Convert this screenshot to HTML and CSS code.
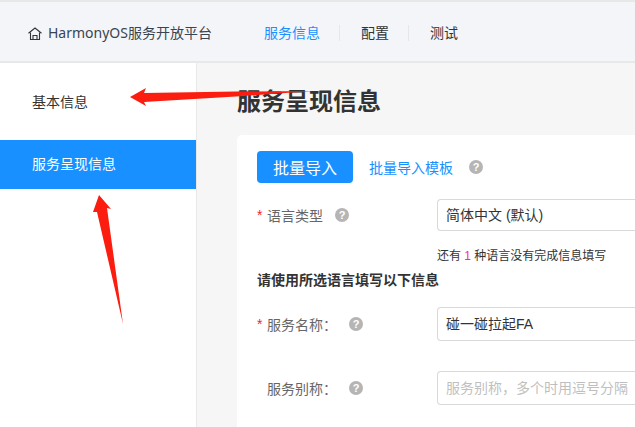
FILE: index.html
```html
<!DOCTYPE html>
<html lang="zh">
<head>
    <meta charset="UTF-8">
    <title>HarmonyOS服务开放平台</title>
    <link rel="stylesheet" href="styles.css">
</head>
<body>
    <header class="topbar">
        <div class="brand">
            <svg class="home-icon" width="14" height="13" viewBox="0 0 14 13" fill="none" stroke="#333" stroke-width="1.1">
                <path d="M0.5 6.2 L7 1 L13.5 6.2"/>
                <path d="M2.5 5.5 V12.5 H11.5 V5.5"/>
                <path d="M5 12.5 V8.5 H9 V12.5"/>
            </svg>
            <span>HarmonyOS服务开放平台</span>
        </div>
        <nav class="nav">
            <a class="nav-item active">服务信息</a>
            <a class="nav-item">配置</a>
            <a class="nav-item">测试</a>
        </nav>
    </header>
    <div class="layout">
        <aside class="sidebar">
            <div class="side-item">基本信息</div>
            <div class="side-item current">服务呈现信息</div>
        </aside>
        <main class="content">
            <h1 class="page-title">服务呈现信息</h1>
            <section class="card">
                <div class="import-row">
                    <button class="import-btn">批量导入</button>
                    <a class="import-link">批量导入模板</a>
                    <span class="help">?</span>
                </div>
                <div class="form-row lang-row">
                    <label class="form-label"><i class="req">*</i>语言类型<span class="help">?</span></label>
                    <div class="field">简体中文 (默认)</div>
                </div>
                <p class="lang-note">还有 <em>1</em> 种语言没有完成信息填写</p>
                <p class="section-hint">请使用所选语言填写以下信息</p>
                <div class="form-row name-row">
                    <label class="form-label"><i class="req">*</i>服务名称：<span class="help">?</span></label>
                    <div class="field tall">碰一碰拉起FA</div>
                </div>
                <div class="form-row alias-row">
                    <label class="form-label"><i class="req blank">*</i>服务别称：<span class="help">?</span></label>
                    <div class="field tall placeholder">服务别称，多个时用逗号分隔</div>
                </div>
            </section>
        </main>
    </div>
    <!-- red annotation arrows drawn over the screenshot -->
    <svg class="arrows" width="635" height="427" viewBox="0 0 635 427">
        <path fill="#fb1e10" d="M130 97 L146 88 L144 93 L236 91.5 L313 91 L236 96.5 L144 102 L146 106 Z"/>
        <path fill="#fb1e10" d="M99 195 L111 209 L107 208 L123 324 L97 212 L93 212 Z"/>
    </svg>
</body>
</html>
```

FILE: styles.css
```css
* {
    box-sizing: border-box;
}
html, body {
    height: 100%;
}
body {
    margin: 0;
    width: 635px;
    height: 427px;
    overflow: hidden;
    position: relative;
    font-family: "Liberation Sans", "Noto Sans CJK SC", sans-serif;
    font-size: 14px;
    color: #333;
    background-color: #f6f6f6;
}
.topbar {
    height: 63px;
    display: flex;
    align-items: center;
    background-color: #f3f5f9;
    border-top: 2px solid #e8e8e8;
    border-bottom: 2px solid #e8e8e8;
    padding-top: 3px;
    padding-left: 28px;
}
.brand {
    width: 236px;
    display: flex;
    align-items: center;
    gap: 6px;
    color: #3a4450;
    font-family: "Noto Sans", "Noto Sans CJK SC", sans-serif;
    font-size: 14px;
    line-height: 20px;
}
.nav {
    display: flex;
    align-items: center;
}
.nav-item {
    font-size: 14px;
    line-height: 16px;
    padding-right: 19px;
    margin-right: 21px;
    border-right: 1px solid #e4e7ec;
}
.nav-item:last-child {
    border-right: none;
}
.nav-item.active {
    color: #1890ff;
}
.layout {
    display: flex;
    height: 364px;
}
.sidebar {
    width: 197px;
    flex-shrink: 0;
    background-color: #fff;
    border-right: 1px solid #e8e8e8;
}
.side-item {
    height: 49px;
    padding-left: 32px;
    line-height: 49px;
    font-size: 14px;
    color: #333;
}
.side-item:first-child {
    height: 77px;
    line-height: 78px;
}
.side-item.current {
    background-color: #1890ff;
    color: #fff;
}
.content {
    flex: 1;
    min-width: 0;
    padding-left: 40px;
    overflow: hidden;
}
.page-title {
    margin: 0;
    padding-top: 23px;
    height: 72px;
    font-size: 24px;
    line-height: 32px;
    font-weight: bold;
    color: #333;
}
.card {
    width: 420px;
    height: 300px;
    background-color: #fff;
    border-radius: 5px;
    padding: 16px 20px;
}
.import-row {
    display: flex;
    align-items: center;
    height: 32px;
}
.import-btn {
    width: 96px;
    height: 32px;
    border: none;
    border-radius: 4px;
    background-color: #1890ff;
    color: #fff;
    font-family: inherit;
    font-size: 16px;
    padding: 0;
}
.import-link {
    margin-left: 16px;
    color: #1890ff;
    font-size: 14px;
}
.help {
    display: inline-block;
    width: 14px;
    height: 14px;
    line-height: 14px;
    border-radius: 50%;
    background-color: #b5b5b5;
    color: #fff;
    font-size: 11px;
    font-weight: bold;
    text-align: center;
    font-family: "Liberation Sans", sans-serif;
}
.import-row .help {
    margin-left: 16px;
}
.form-row {
    display: flex;
    align-items: center;
}
.form-label {
    width: 180px;
    flex-shrink: 0;
    color: #666;
    display: flex;
    align-items: center;
}
.form-label .help {
    margin-left: 12px;
}
.req {
    width: 10px;
    font-style: normal;
    color: #f5222d;
    flex-shrink: 0;
}
.req.blank {
    visibility: hidden;
}
.field {
    flex: 1;
    height: 32px;
    line-height: 30px;
    padding-left: 8px;
    border: 1px solid #d9d9d9;
    border-right: none;
    border-radius: 4px 0 0 4px;
    color: #333;
    white-space: nowrap;
    overflow: hidden;
}
.field.tall {
    height: 34px;
    line-height: 32px;
}
.field.placeholder {
    color: #bfbfbf;
}
.lang-row {
    margin-top: 16px;
}
.lang-note {
    margin: 17px 0 0 180px;
    font-size: 12px;
    line-height: 17px;
    color: #333;
}
.lang-note em {
    font-style: normal;
    color: #eb2f96;
}
.section-hint {
    margin: 5px 0 0;
    font-size: 14px;
    line-height: 20px;
    font-weight: bold;
    color: #333;
}
.name-row {
    margin-top: 17px;
}
.alias-row {
    margin-top: 30px;
}
.arrows {
    position: absolute;
    left: 0;
    top: 0;
    pointer-events: none;
}
```
